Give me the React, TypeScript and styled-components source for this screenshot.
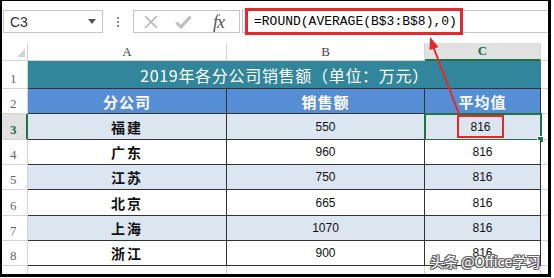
import styled, { createGlobalStyle } from 'styled-components';

const GlobalStyle = createGlobalStyle`
  html, body {
    margin: 0;
    padding: 0;
    background: #fff;
  }
`;

const CJK = `"Noto Sans CJK SC", "Noto Sans", sans-serif`;
const DARK = '#333';
const GRID = '#d4d4d4';
const GREEN = '#217346';
const RED = '#e8262b';

// sheet data
const rows = [
  { name: '福建', sales: 550, avg: 816 },
  { name: '广东', sales: 960, avg: 816 },
  { name: '江苏', sales: 750, avg: 816 },
  { name: '北京', sales: 665, avg: 816 },
  { name: '上海', sales: 1070, avg: 816 },
  { name: '浙江', sales: 900, avg: 816 },
];

function App() {
  return (
    <>
      <GlobalStyle />
      <Frame>
        <Toolbar>
          <NameBox>
            C3
            <Caret />
          </NameBox>
          <Dots>
            <i />
            <i />
            <i />
          </Dots>
          <FxGroup>
            <svg width="14" height="14" viewBox="0 0 14 14">
              <path d="M1 1 L13 13 M13 1 L1 13" stroke="#b4b4b4" strokeWidth="1.6" fill="none" />
            </svg>
            <svg width="17" height="14" viewBox="0 0 17 14">
              <path d="M1.5 7.5 L6 12 L15.5 1.5" stroke="#bcbcbc" strokeWidth="3" fill="none" />
            </svg>
            <Fx>fx</Fx>
          </FxGroup>
          <FormulaBar>
            <RedBox>=ROUND(AVERAGE(B$3:B$8),0)</RedBox>
          </FormulaBar>
        </Toolbar>

        <Sheet>
          <Corner />
          <ColHead>A</ColHead>
          <ColHead>B</ColHead>
          <ColHead $active>C</ColHead>
          <Filler />

          <RowHead>1</RowHead>
          <Title>2019年各分公司销售额（单位：万元）</Title>
          <Filler />

          <RowHead>2</RowHead>
          <Head>分公司</Head>
          <Head>销售额</Head>
          <Head>平均值</Head>
          <Filler />

          {rows.map((r, i) => (
            <Row key={r.name} r={r} i={i} />
          ))}

          <RowHead>9</RowHead>
          <Blank />
          <Blank />
          <Blank />
          <Filler />
        </Sheet>

        <Arrow width="554" height="278" viewBox="0 0 554 278">
          <line x1="459" y1="114" x2="433" y2="46" stroke={RED} strokeWidth="2" />
          <polygon points="430,37 438.5,47 429.5,50" fill={RED} />
        </Arrow>
        <Watermark>头条 @Office学习</Watermark>
      </Frame>
    </>
  );
}

function Row({ r, i }: { r: (typeof rows)[number]; i: number }) {
  const zebra = i % 2 === 0;
  const active = i === 0;
  return (
    <>
      <RowHead $active={active}>{i + 3}</RowHead>
      <Cell $zebra={zebra} $bold>{r.name}</Cell>
      <Cell $zebra={zebra}>{r.sales}</Cell>
      <Cell $zebra={zebra} $active={active}>
        {active ? <Mark>{r.avg}</Mark> : r.avg}
      </Cell>
      <Filler />
    </>
  );
}

export default App;

const Frame = styled.div`
  position: relative;
  width: 551px;
  height: 277px;
  box-sizing: border-box;
  border-style: solid;
  border-color: #000;
  border-width: 1px 3px 3px 2px;
  overflow: hidden;
  background: #fff;
`;

/* formula toolbar */
const Toolbar = styled.div`
  display: flex;
  align-items: flex-start;
  height: 42px;
  box-sizing: border-box;
  padding: 9px 0 0 1px;
`;

const NameBox = styled.div`
  width: 100px;
  height: 23px;
  box-sizing: border-box;
  border: 1px solid #c6c6c6;
  display: flex;
  align-items: center;
  justify-content: space-between;
  padding: 0 6px;
  font: 14px "Liberation Sans", Arial, sans-serif;
  color: #333;
`;

const Caret = styled.span`
  width: 0;
  height: 0;
  border-left: 4px solid transparent;
  border-right: 4px solid transparent;
  border-top: 5px solid #555;
`;

const Dots = styled.div`
  width: 30px;
  height: 23px;
  display: flex;
  flex-direction: column;
  align-items: center;
  justify-content: center;
  gap: 2px;

  i {
    width: 2px;
    height: 2px;
    background: #8a8a8a;
  }
`;

const FxGroup = styled.div`
  width: 107px;
  height: 23px;
  box-sizing: border-box;
  border: 1px solid #c6c6c6;
  display: flex;
  align-items: center;
  padding-left: 10px;
  gap: 17px;

  svg:nth-child(2) {
    margin-right: 4px;
  }
`;

const Fx = styled.span`
  font: italic 18px "Liberation Serif", serif;
  color: #555;
  line-height: 1;
  letter-spacing: -1px;
`;

const FormulaBar = styled.div`
  flex: 1;
  margin-left: 2px;
  height: 23px;
  box-sizing: border-box;
  border: 1px solid #c6c6c6;
  border-right: none;
  display: flex;
  align-items: center;
`;

const RedBox = styled.div`
  flex: 0 0 auto;
  margin-left: 2px;
  width: 218px;
  height: 27px;
  box-sizing: border-box;
  border: 3px solid ${RED};
  padding-left: 6px;
  display: flex;
  align-items: center;
  font: 13px "Liberation Mono", "Courier New", monospace;
  color: #000;
  white-space: nowrap;
`;

/* worksheet */
const Sheet = styled.div`
  display: grid;
  grid-template-columns: 26px 199px 198px 116px 1fr;
  grid-template-rows: 18px 28px 25px 26px 25px 25px 26px 25px 25px 25px;

  & > div {
    box-sizing: border-box;
  }
`;

const Corner = styled.div`
  position: relative;
  border-right: 1px solid ${GRID};
  border-bottom: 1px solid ${GRID};

  &::after {
    content: "";
    position: absolute;
    right: 2px;
    bottom: 3px;
    border-left: 8px solid transparent;
    border-bottom: 8px solid #d0d0d0;
  }
`;

const ColHead = styled.div<{ $active?: boolean }>`
  display: flex;
  align-items: center;
  justify-content: center;
  font: ${(p) => (p.$active ? 'bold' : 'normal')} 13px "Liberation Serif", serif;
  color: ${(p) => (p.$active ? GREEN : '#444')};
  background: ${(p) => (p.$active ? '#e1e1e1' : '#fff')};
  border-right: 1px solid ${GRID};
  border-bottom: ${(p) => (p.$active ? `2px solid ${GREEN}` : `1px solid ${GRID}`)};
`;

const RowHead = styled.div<{ $active?: boolean }>`
  display: flex;
  align-items: flex-end;
  padding: 0 0 1px 8px;
  font: ${(p) => (p.$active ? 'bold' : 'normal')} 13px "Liberation Serif", serif;
  color: ${(p) => (p.$active ? GREEN : '#666')};
  background: ${(p) => (p.$active ? '#e1e1e1' : '#fff')};
  border-right: ${(p) => (p.$active ? `2px solid ${GREEN}` : `1px solid ${GRID}`)};
  border-bottom: 1px solid ${GRID};
`;

const Title = styled.div`
  grid-column: span 3;
  display: flex;
  align-items: center;
  justify-content: center;
  background: #31869b;
  color: #fff;
  font: 16px ${CJK};
  letter-spacing: 0.7px;
  border-bottom: 1px solid ${DARK};
`;

const Head = styled.div`
  display: flex;
  align-items: center;
  justify-content: center;
  background: #558ed5;
  color: #fff;
  font: bold 15px ${CJK};
  letter-spacing: 1px;
  border-right: 1px solid ${DARK};
  border-bottom: 1px solid ${DARK};
`;

const Cell = styled.div<{ $zebra?: boolean; $bold?: boolean; $active?: boolean }>`
  position: relative;
  display: flex;
  align-items: center;
  justify-content: center;
  background: ${(p) => (p.$zebra ? '#dce6f1' : '#fff')};
  color: #111;
  font: ${(p) => (p.$bold ? `bold 14px ${CJK}` : `12px "Liberation Sans", Arial, sans-serif`)};
  letter-spacing: ${(p) => (p.$bold ? '2px' : '0')};
  border-right: 1px solid ${DARK};
  border-bottom: 1px solid ${DARK};
  ${(p) =>
    p.$active &&
    `
    outline: 2px solid ${GREEN};
    outline-offset: -1px;
    &::after {
      content: "";
      position: absolute;
      right: -4px;
      bottom: -4px;
      width: 5px;
      height: 5px;
      background: ${GREEN};
      border: 1px solid #fff;
    }
  `}
`;

const Mark = styled.span`
  width: 47px;
  height: 23px;
  box-sizing: border-box;
  border: 2px solid ${RED};
  display: flex;
  align-items: center;
  justify-content: center;
  margin-right: 4px;
`;

const Blank = styled.div`
  border-right: 1px solid ${GRID};
`;

const Filler = styled.div`
  border-bottom: 1px solid ${GRID};
`;

/* annotations on top */
const Arrow = styled.svg`
  position: absolute;
  left: -2px;
  top: -1px;
  pointer-events: none;
`;

const Watermark = styled.div`
  position: absolute;
  left: 428px;
  top: 251px;
  font: 14px ${CJK};
  line-height: 18px;
  color: #fff;
  white-space: nowrap;
  text-shadow: 1px 0 0 #666, -1px 0 0 #666, 0 1px 0 #666, 0 -1px 0 #666,
    1px 1px 0 #666, -1px -1px 0 #666, 1px -1px 0 #666, -1px 1px 0 #666;
`;
